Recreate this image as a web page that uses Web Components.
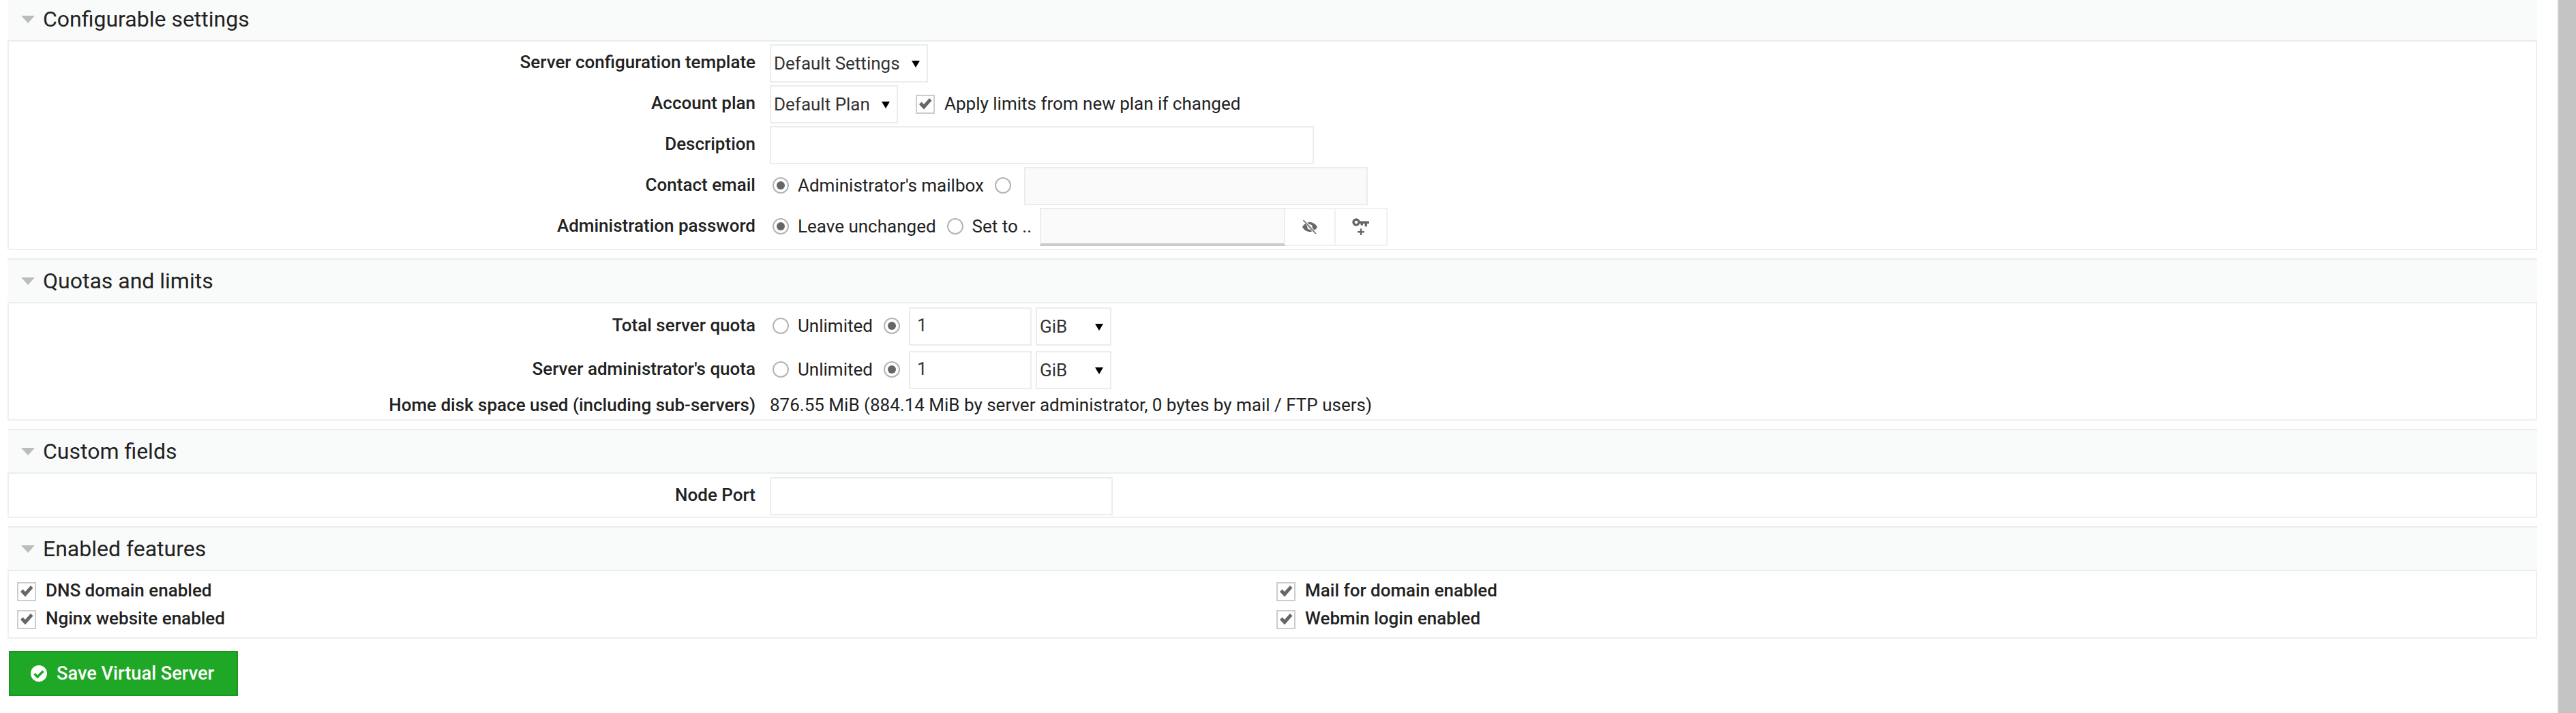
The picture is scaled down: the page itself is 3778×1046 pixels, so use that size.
<!DOCTYPE html>
<html>
<head>
<meta charset="utf-8">
<title>Edit Virtual Server</title>
<style>
  html, body { margin: 0; height: 100%; overflow: hidden; background: #fff; }
  body { font-family: Roboto, "Liberation Sans", sans-serif; font-size: 26px; color: #222; }
</style>
</head>
<body>
<vm-page>
  <vm-panel title="Configurable settings" pad="4px 0 4px" gap="4px">
    <vm-row label="Server configuration template"><vm-select width="232">Default Settings</vm-select></vm-row>
    <vm-row label="Account plan">
      <vm-select width="188">Default Plan</vm-select>
      <vm-check style="margin-left:26px" checked>Apply limits from new plan if changed</vm-check>
    </vm-row>
    <vm-row label="Description"><vm-input width="798"></vm-input></vm-row>
    <vm-row label="Contact email">
      <vm-radio checked style="margin-left:4px">Administrator's mailbox</vm-radio>
      <vm-radio style="margin-left:16px"></vm-radio>
      <vm-input width="504" disabled style="margin-left:19px"></vm-input>
    </vm-row>
    <vm-row label="Administration password">
      <vm-radio checked style="margin-left:4px">Leave unchanged</vm-radio>
      <vm-radio style="margin-left:16px">Set to ..</vm-radio>
      <vm-password style="margin-left:12px"></vm-password>
    </vm-row>
  </vm-panel>

  <vm-panel title="Quotas and limits" pad="6px 0 0" gap="8px">
    <vm-row label="Total server quota">
      <vm-radio style="margin-left:4px">Unlimited</vm-radio>
      <vm-radio checked style="margin-left:16px"></vm-radio>
      <vm-input width="180" value="1" style="margin-left:13px"></vm-input>
      <vm-select width="111" style="margin-left:6px">GiB</vm-select>
    </vm-row>
    <vm-row label="Server administrator's quota">
      <vm-radio style="margin-left:4px">Unlimited</vm-radio>
      <vm-radio checked style="margin-left:16px"></vm-radio>
      <vm-input width="180" value="1" style="margin-left:13px"></vm-input>
      <vm-select width="111" style="margin-left:6px">GiB</vm-select>
    </vm-row>
    <vm-row label="Home disk space used (including sub-servers)" plain>876.55 MiB (884.14 MiB by server administrator, 0 bytes by mail / FTP users)</vm-row>
  </vm-panel>

  <vm-panel title="Custom fields" pad="5px 0 2px">
    <vm-row label="Node Port"><vm-input width="503"></vm-input></vm-row>
  </vm-panel>

  <vm-panel title="Enabled features" pad="13px 0 10px">
    <vm-features>
      <vm-check checked strong>DNS domain enabled</vm-check>
      <vm-check checked strong>Mail for domain enabled</vm-check>
      <vm-check checked strong>Nginx website enabled</vm-check>
      <vm-check checked strong>Webmin login enabled</vm-check>
    </vm-features>
  </vm-panel>

  <vm-button>Save Virtual Server</vm-button>
</vm-page>

<script>
// page frame with the browser scrollbar on the right
class VmPage extends HTMLElement {
  constructor() {
    super();
    this.attachShadow({ mode: 'open' }).innerHTML = `
      <style>
        :host { display: flex; height: 100vh; overflow: hidden; }
        .main { flex: 1; min-width: 0; margin-top: -5px; padding: 0 30px 0 11px; display: flex; flex-direction: column; gap: 12px; }
        ::slotted(*) { flex: none; }
        .bar { width: 25px; flex: none; background: #c2c3c2; border-left: 2px solid #cfd0cf; }
      </style>
      <div class="main"><slot></slot></div>
      <div class="bar"></div>`;
  }
}

class VmPanel extends HTMLElement {
  constructor() {
    super();
    this.attachShadow({ mode: 'open' });
  }
  connectedCallback() {
    const pad = this.getAttribute('pad') || '0';
    const gap = this.getAttribute('gap') || '0';
    this.shadowRoot.innerHTML = `
      <style>
        :host { display: block; border: 2px solid #eeefef; border-top: 0; }
        .head { height: 62px; box-sizing: content-box; display: flex; align-items: center; background: #f9fafa;
                border-top: 2px solid #ebecec; border-bottom: 2px solid #ebecec; margin: 0 -2px; padding: 0 2px; }
        .arrow { width: 0; height: 0; margin-left: 18px; border-left: 10px solid transparent; border-right: 10px solid transparent;
                 border-top: 11px solid #bcbcbc; }
        h3 { margin: 0 0 0 12px; font-size: 32px; font-weight: 400; color: #222; line-height: 1; }
        .body { display: flex; flex-direction: column; padding: ${pad}; gap: ${gap}; }
      </style>
      <div class="head"><span class="arrow"></span><h3>${this.getAttribute('title')}</h3></div>
      <div class="body"><slot></slot></div>`;
  }
}

class VmRow extends HTMLElement {
  constructor() {
    super();
    this.attachShadow({ mode: 'open' });
  }
  connectedCallback() {
    const plain = this.hasAttribute('plain');
    this.shadowRoot.innerHTML = `
      <style>
        :host { display: grid; grid-template-columns: 1095px 1fr; column-gap: 21px; align-items: center; box-sizing: border-box;
                ${plain ? 'height: 44px; margin-top: -8px; padding-top: 2px;' : 'min-height: 56px;'} }
        .label { text-align: right; font-weight: 500; color: #222; line-height: 30px; ${plain ? '' : 'margin-bottom: 5px;'} }
        .value { display: flex; align-items: center; white-space: nowrap; }
      </style>
      <div class="label">${this.getAttribute('label')}</div>
      <div class="value"><slot></slot></div>`;
  }
}

class VmSelect extends HTMLElement {
  constructor() {
    super();
    this.attachShadow({ mode: 'open' });
  }
  connectedCallback() {
    this.shadowRoot.innerHTML = `
      <style>
        :host { display: flex; align-items: center; box-sizing: border-box; height: 56px; width: ${this.getAttribute('width')}px;
                border: 2px solid #ebecec; background: #fff; padding: 0 10px 0 4px; color: #333; }
        .txt { flex: 1; }
        .arrow { width: 0; height: 0; border-left: 6px solid transparent; border-right: 6px solid transparent; border-top: 10px solid #000; margin-top: 2px; }
      </style>
      <span class="txt"><slot></slot></span><span class="arrow"></span>`;
  }
}

class VmInput extends HTMLElement {
  constructor() {
    super();
    this.attachShadow({ mode: 'open' });
  }
  connectedCallback() {
    const off = this.hasAttribute('disabled');
    this.shadowRoot.innerHTML = `
      <style>
        :host { display: block; height: 56px; width: ${this.getAttribute('width')}px; }
        input { display: block; box-sizing: border-box; width: 100%; height: 100%; margin: 0; outline: 0; padding: 0 10px 4px;
                border: 2px solid #ebecec; border-radius: 0; background: ${off ? '#fafafa' : '#fff'}; font: 26px Roboto, sans-serif; color: #333; }
      </style>
      <input type="text" value="${this.getAttribute('value') || ''}" ${off ? 'disabled' : ''}>`;
  }
}

class VmRadio extends HTMLElement {
  constructor() {
    super();
    this.attachShadow({ mode: 'open' });
  }
  connectedCallback() {
    const on = this.hasAttribute('checked');
    this.shadowRoot.innerHTML = `
      <style>
        :host { display: inline-flex; align-items: center; color: #222; }
        .dot { box-sizing: border-box; width: 24px; height: 24px; flex: none; border: 2px solid #b4b4b4; border-radius: 50%; background: #fff;
               display: flex; align-items: center; justify-content: center; margin-top: -2px; }
        .dot i { width: 12px; height: 12px; border-radius: 50%; background: #666; display: ${on ? 'block' : 'none'}; }
        .txt { margin: 0 0 3px 13px; }
      </style>
      <span class="dot"><i></i></span>${this.textContent.trim() ? '<span class="txt"><slot></slot></span>' : ''}`;
  }
}

class VmCheck extends HTMLElement {
  constructor() {
    super();
    this.attachShadow({ mode: 'open' });
  }
  connectedCallback() {
    const strong = this.hasAttribute('strong');
    this.shadowRoot.innerHTML = `
      <style>
        :host { display: inline-flex; align-items: center; color: #222; ${strong ? 'font-weight: 500;' : ''} }
        .box { box-sizing: border-box; width: 28px; height: 28px; flex: none; border: 2px solid #cdcdcd; background: #fff; }
        svg { display: block; width: 24px; height: 24px; }
        .txt { margin: 0 0 3px 14px; }
      </style>
      <span class="box"><svg viewBox="0 0 24 24"><path d="M3 12l3.5-3.5 3.5 3.5 8-9 3.5 3.5-11.5 13z" fill="#666"/></svg></span>
      <span class="txt"><slot></slot></span>`;
  }
}

// password box with the show and generate buttons
class VmPassword extends HTMLElement {
  constructor() {
    super();
    this.attachShadow({ mode: 'open' }).innerHTML = `
      <style>
        :host { display: flex; height: 56px; }
        .field { box-sizing: border-box; width: 360px; border: 2px solid #ebecec; border-bottom: 4px solid #cbcbcb; background: #fafafa; }
        .btn { box-sizing: border-box; width: 74px; display: flex; align-items: center; justify-content: center; background: #fff;
               border: 2px solid #f1f1f1; border-left: 0; }
        .btn svg { display: block; }
      </style>
      <div class="field"></div>
      <div class="btn">
        <svg width="24" height="20" viewBox="0 0 24 20">
          <path d="M1 10C4 5 8 3 12 3s8 2 11 7c-3 5-7 7-11 7S4 15 1 10z" fill="#666"/>
          <circle cx="12" cy="10" r="3" fill="none" stroke="#fff" stroke-width="1.5"/>
          <path d="M3 0l18 20" stroke="#fff" stroke-width="3.5"/>
          <path d="M2.5 0l18.5 20" stroke="#666" stroke-width="1.6"/>
        </svg>
      </div>
      <div class="btn" style="width:76px">
        <svg width="26" height="26" viewBox="0 0 26 26">
          <circle cx="6" cy="6" r="4" fill="none" stroke="#666" stroke-width="3.4"/>
          <path d="M9 4.5h16v3.4h-3v4.4h-3.4V7.9h-2.6v2.6h-3.4V7.9H9z" fill="#666"/>
          <path d="M13 15.5v9.5M8.2 20.2h9.6" stroke="#666" stroke-width="2.4"/>
        </svg>
      </div>`;
  }
}

class VmFeatures extends HTMLElement {
  constructor() {
    super();
    this.attachShadow({ mode: 'open' }).innerHTML = `
      <style>
        :host { display: grid; grid-template-columns: 1847px 1fr; row-gap: 8px; padding-left: 12px; justify-items: start; }
      </style>
      <slot></slot>`;
  }
}

class VmButton extends HTMLElement {
  constructor() {
    super();
    this.attachShadow({ mode: 'open' }).innerHTML = `
      <style>
        :host { display: flex; align-items: center; box-sizing: border-box; align-self: flex-start; height: 66px; width: 336px; margin: 6px 0 0 2px;
                padding-left: 30px; background: #1fa726; border: 2px solid #1b9421; color: #fff; font-size: 27.2px; font-weight: 500; }
        svg { display: block; flex: none; margin-right: 14px; }
      </style>
      <svg width="24" height="24" viewBox="0 0 24 24">
        <circle cx="12" cy="12" r="12" fill="#fff"/>
        <path d="M5.5 12.5l4.5 4.5 8.5-8.5" fill="none" stroke="#1fa726" stroke-width="3.4"/>
      </svg>
      <slot></slot>`;
  }
}

customElements.define('vm-page', VmPage);
customElements.define('vm-panel', VmPanel);
customElements.define('vm-row', VmRow);
customElements.define('vm-select', VmSelect);
customElements.define('vm-input', VmInput);
customElements.define('vm-radio', VmRadio);
customElements.define('vm-check', VmCheck);
customElements.define('vm-password', VmPassword);
customElements.define('vm-features', VmFeatures);
customElements.define('vm-button', VmButton);
</script>
</body>
</html>
